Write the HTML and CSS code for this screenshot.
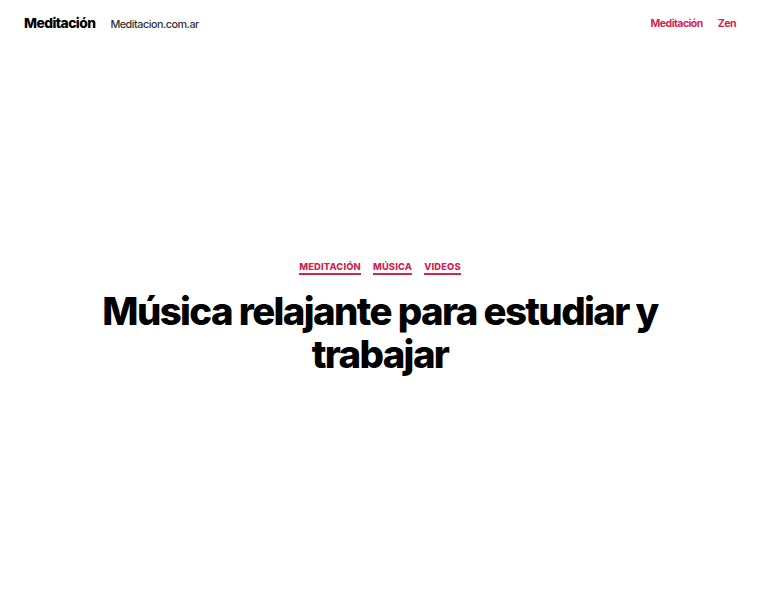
FILE: index.html
```html
<!DOCTYPE html>
<html lang="es">
<head>
<meta charset="utf-8">
<title>Música relajante para estudiar y trabajar</title>
<link rel="stylesheet" href="styles.css">
</head>
<body>
<header class="site-header">
  <div class="branding">
    <a class="site-title" href="#">Meditación</a>
    <span class="site-description">Meditacion.com.ar</span>
  </div>
  <nav class="primary-menu">
    <a href="#">Meditación</a>
    <a href="#">Zen</a>
  </nav>
</header>
<main class="content">
  <div class="entry-header">
    <div class="categories">
      <a href="#">Meditación</a>
      <a href="#">Música</a>
      <a href="#">Videos</a>
    </div>
    <h1 class="entry-title">Música relajante para estudiar y trabajar</h1>
  </div>
</main>
</body>
</html>
```
FILE: styles.css
```css
* { box-sizing: border-box; }
html, body { margin: 0; padding: 0; background: #fff; }
body {
  font-family: Inter, "Liberation Sans", sans-serif;
  color: #000;
}
a { text-decoration: none; }
.site-header {
  display: flex;
  justify-content: space-between;
  align-items: center;
  padding: 0 24px;
  height: 46px;
}
.branding {
  display: flex;
  align-items: baseline;
  gap: 15px;
}
.site-title {
  color: #000;
  font-weight: 800;
  font-size: 13.8px;
  letter-spacing: -0.04em;
}
.site-description {
  color: #333;
  font-size: 10.8px;
  font-weight: 500;
  letter-spacing: -0.045em;
}
.primary-menu {
  display: flex;
  gap: 15px;
}
.primary-menu a {
  color: #cd2653;
  font-size: 10.5px;
  font-weight: 700;
  letter-spacing: -0.05em;
}
.content {
  padding-top: 215px;
}
.entry-header {
  text-align: center;
  padding: 0 40px;
}
.categories {
  display: flex;
  justify-content: center;
  gap: 12px;
  margin-bottom: 15px;
}
.categories a {
  color: #cd2653;
  font-size: 9.3px;
  font-weight: 800;
  text-transform: uppercase;
  letter-spacing: 0.02em;
  border-bottom: 2px solid #cd2653;
  line-height: 1.25;
}
.entry-title {
  margin: 0 auto;
  max-width: 600px;
  font-size: 38.4px;
  font-weight: 800;
  line-height: 43px;
  letter-spacing: -0.042em;
}
```
